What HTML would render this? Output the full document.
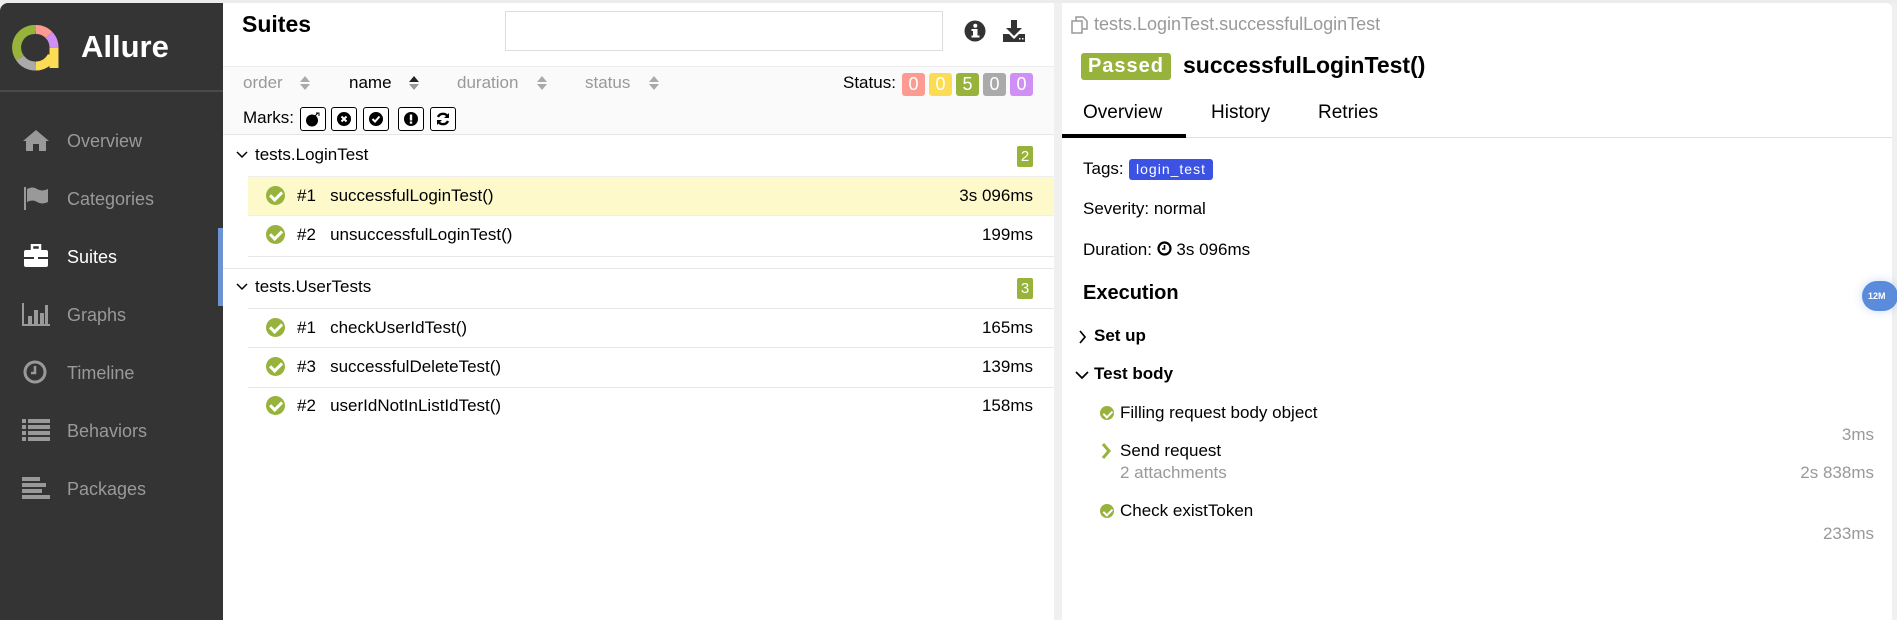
<!DOCTYPE html>
<html><head><meta charset="utf-8"><style>
*{margin:0;padding:0;box-sizing:border-box}
body{width:1897px;height:620px;overflow:hidden;background:#f0f0f0;font-family:"Liberation Sans",Arial,sans-serif;position:relative;color:#000}
.a{position:absolute;white-space:nowrap}
.side{left:0;top:3px;width:223px;height:617px;background:#343434;border-top-left-radius:8px}
.nav{left:67px;font-size:18px;color:#999;line-height:20px}
.ic{left:22px;width:28px;height:24px}
.left{left:223px;top:3px;width:831px;height:617px;background:#fff}
.right{left:1062px;top:3px;width:830px;height:617px;background:#fff;border-top-right-radius:6px}
.t17{font-size:17px;line-height:20px}
.gray{color:#999}
.bd{height:1px;background:#e6e6e6}
.chk{width:19px;height:19px;border-radius:50%;background:#97b33c}
.chk::after{content:"";position:absolute;left:33%;top:18%;width:28%;height:48%;border-right:3px solid #fff;border-bottom:3px solid #fff;transform:rotate(45deg)}
.chk.s::after{border-width:2px}
.mk{width:26px;height:24px;border:1.5px solid #000;border-radius:3px;background:#fff;top:107px}
.mk svg{position:absolute;left:4px;top:3px}
.sb{top:73px;width:23px;height:23px;border-radius:3px;color:#fff;font-size:18px;text-align:center;line-height:23px}
</style></head><body>
<div class="a" style="left:0;top:0;width:1897px;height:3px;background:#ececec"></div>
<div class="a side"></div>
<svg class="a" style="left:12px;top:24px" width="50" height="50" viewBox="0 0 50 50">
<g fill="none" stroke-width="9">
<path d="M24 5.5 A18 18 0 0 0 8 34" stroke="#97b33c"/>
<path d="M8 34 A18 18 0 0 0 24 42" stroke="#aaa"/>
<path d="M24 5.5 A18 18 0 0 1 37 11" stroke="#fd9a91"/>
<path d="M37 11 A18 18 0 0 1 42 24" stroke="#d08ff5"/>
<path d="M42 24 L42 44 M24 42 A18 18 0 0 0 40 32" stroke="#fddc55"/>
</g></svg>
<div class="a" style="left:81px;top:29px;font-size:31px;font-weight:bold;color:#fff">Allure</div>
<div class="a" style="left:0;top:90px;width:223px;height:2px;background:#4a4a4a"></div>
<svg class="a ic" style="top:128px" viewBox="0 0 28 24"><path d="M14 2 L1 13 L4 13 L4 23 L11 23 L11 16 L17 16 L17 23 L24 23 L24 13 L27 13 Z" fill="#999"/></svg>
<div class="a nav" style="top:131px">Overview</div>
<svg class="a ic" style="top:186px" viewBox="0 0 28 24"><path d="M3 1 L3 24" stroke="#999" stroke-width="2"/><path d="M5 3 Q11 0 15 3 Q20 6 26 3 L26 16 Q20 19 15 16 Q11 13 5 16Z" fill="#999"/></svg>
<div class="a nav" style="top:189px">Categories</div>
<svg class="a ic" style="top:244px" viewBox="0 0 28 24"><rect x="10" y="1" width="8" height="5" fill="none" stroke="#fff" stroke-width="2.5"/><rect x="2" y="6" width="24" height="17" rx="2" fill="#fff"/><rect x="2" y="13" width="24" height="2" fill="#343434"/><rect x="12" y="12" width="4" height="4" fill="#fff"/></svg>
<div class="a nav" style="top:247px;color:#fff">Suites</div>
<div class="a" style="left:218px;top:228px;width:5px;height:78px;background:#6d93d3"></div>
<svg class="a ic" style="top:302px" viewBox="0 0 28 24"><path d="M1 1 V23 H28" stroke="#999" stroke-width="2" fill="none"/><rect x="6" y="14" width="4" height="8" fill="#999"/><rect x="12" y="8" width="4" height="14" fill="#999"/><rect x="18" y="11" width="4" height="11" fill="#999"/><rect x="23" y="3" width="3" height="19" fill="#999"/></svg>
<div class="a nav" style="top:305px">Graphs</div>
<svg class="a ic" style="top:360px" viewBox="0 0 28 24"><circle cx="13" cy="12" r="10" fill="none" stroke="#999" stroke-width="3"/><path d="M13 6 V13 H9" stroke="#999" stroke-width="2.5" fill="none"/></svg>
<div class="a nav" style="top:363px">Timeline</div>
<svg class="a ic" style="top:418px" viewBox="0 0 28 24" fill="#999"><rect x="0" y="1" width="4" height="4"/><rect x="6" y="1" width="22" height="4"/><rect x="0" y="7" width="4" height="4"/><rect x="6" y="7" width="22" height="4"/><rect x="0" y="13" width="4" height="4"/><rect x="6" y="13" width="22" height="4"/><rect x="0" y="19" width="4" height="4"/><rect x="6" y="19" width="22" height="4"/></svg>
<div class="a nav" style="top:421px">Behaviors</div>
<svg class="a ic" style="top:476px" viewBox="0 0 28 24" fill="#999"><rect x="0" y="1" width="18" height="4"/><rect x="0" y="7" width="24" height="4"/><rect x="0" y="13" width="20" height="4"/><rect x="0" y="19" width="28" height="4"/></svg>
<div class="a nav" style="top:479px">Packages</div>

<div class="a left"></div>
<div class="a" style="left:242px;top:11px;font-size:23px;font-weight:bold">Suites</div>
<div class="a" style="left:505px;top:11px;width:438px;height:40px;border:1px solid #ddd;background:#fff"></div>
<svg class="a" style="left:964px;top:20px" width="22" height="22" viewBox="0 0 22 22"><circle cx="11" cy="11" r="10.5" fill="#333"/><rect x="9" y="9" width="4.5" height="8" fill="#fff"/><rect x="7.5" y="9" width="3" height="2" fill="#fff"/><rect x="7.5" y="15.5" width="8" height="2" fill="#fff"/><circle cx="11.3" cy="5.8" r="2" fill="#fff"/></svg>
<svg class="a" style="left:1002px;top:19px" width="24" height="24" viewBox="0 0 24 24" fill="#333"><rect x="9" y="1" width="6" height="9"/><path d="M4 9 H20 L12 17Z"/><path d="M1 15 H7 L12 20 L17 15 H23 V23 H1Z"/><rect x="17" y="19" width="1.5" height="1.5" fill="#fff"/><rect x="20" y="19" width="1.5" height="1.5" fill="#fff"/></svg>
<div class="a" style="left:223px;top:66px;width:831px;height:69px;background:#fafafa;border-top:1px solid #eee;border-bottom:1px solid #e6e6e6"></div>
<div class="a t17 gray" style="left:243px;top:73px">order</div>
<div class="a t17" style="left:349px;top:73px">name</div>
<div class="a t17 gray" style="left:457px;top:73px">duration</div>
<div class="a t17 gray" style="left:585px;top:73px">status</div>
<svg class="a" style="left:299px;top:75px" width="12" height="16"><path d="M1 7 L6 1 L11 7Z M1 9 L6 15 L11 9Z" fill="#aaa"/></svg>
<svg class="a" style="left:408px;top:75px" width="12" height="16"><path d="M1 7 L6 1 L11 7Z" fill="#222"/><path d="M1 9 L6 15 L11 9Z" fill="#999"/></svg>
<svg class="a" style="left:536px;top:75px" width="12" height="16"><path d="M1 7 L6 1 L11 7Z M1 9 L6 15 L11 9Z" fill="#aaa"/></svg>
<svg class="a" style="left:648px;top:75px" width="12" height="16"><path d="M1 7 L6 1 L11 7Z M1 9 L6 15 L11 9Z" fill="#aaa"/></svg>
<div class="a t17" style="left:243px;top:108px">Marks:</div>
<div class="a mk" style="left:300px"><svg width="16" height="16" viewBox="0 0 16 16"><circle cx="7" cy="9.5" r="6" fill="#000"/><path d="M10 5 L13 2 M11 2 H14 V5" stroke="#000" stroke-width="1" fill="none"/></svg></div>
<div class="a mk" style="left:331px"><svg width="16" height="16" viewBox="0 0 16 16"><circle cx="8" cy="8" r="7" fill="#000"/><path d="M5.5 5.5 L10.5 10.5 M10.5 5.5 L5.5 10.5" stroke="#fff" stroke-width="2"/></svg></div>
<div class="a mk" style="left:363px"><svg width="16" height="16" viewBox="0 0 16 16"><circle cx="8" cy="8" r="7" fill="#000"/><path d="M4.5 8 L7 10.5 L11.5 5.5" stroke="#fff" stroke-width="2" fill="none"/></svg></div>
<div class="a mk" style="left:398px"><svg width="16" height="16" viewBox="0 0 16 16"><circle cx="8" cy="8" r="7" fill="#000"/><rect x="6.8" y="3.5" width="2.4" height="6" fill="#fff"/><rect x="6.8" y="10.5" width="2.4" height="2.2" fill="#fff"/></svg></div>
<div class="a mk" style="left:430px"><svg width="16" height="16" viewBox="0 0 16 16"><path d="M13 6 A5.5 5.5 0 0 0 3 6 M3 10 A5.5 5.5 0 0 0 13 10" stroke="#000" stroke-width="2.4" fill="none"/><path d="M14 2 V7 H9Z M2 14 V9 H7Z" fill="#000"/></svg></div>
<div class="a t17" style="left:843px;top:73px">Status:</div>
<div class="a sb" style="left:902px;background:#fd9a91">0</div>
<div class="a sb" style="left:929px;background:#fddc55">0</div>
<div class="a sb" style="left:956px;background:#97b33c">5</div>
<div class="a sb" style="left:983px;background:#aaa">0</div>
<div class="a sb" style="left:1010px;background:#d08ff5">0</div>

<svg class="a" style="left:236px;top:150px" width="12" height="10"><path d="M1 2 L6 7 L11 2" stroke="#000" stroke-width="1.5" fill="none"/></svg>
<div class="a t17" style="left:255px;top:145px">tests.LoginTest</div>
<div class="a" style="left:1017px;top:146px;width:16px;height:21px;background:#97b33c;color:#fff;font-size:15px;text-align:center;line-height:21px;border-radius:2px">2</div>
<div class="a" style="left:248px;top:176px;width:806px;height:40px;background:#fdf9cb;border-top:1px solid #eee;border-bottom:1px solid #eee"></div>
<div class="a bd" style="left:248px;top:256px;width:806px"></div>
<div class="a bd" style="left:223px;top:268px;width:831px"></div>
<svg class="a" style="left:236px;top:282px" width="12" height="10"><path d="M1 2 L6 7 L11 2" stroke="#000" stroke-width="1.5" fill="none"/></svg>
<div class="a t17" style="left:255px;top:277px">tests.UserTests</div>
<div class="a" style="left:1017px;top:278px;width:16px;height:21px;background:#97b33c;color:#fff;font-size:15px;text-align:center;line-height:21px;border-radius:2px">3</div>
<div class="a bd" style="left:248px;top:308px;width:806px"></div>
<div class="a bd" style="left:248px;top:347px;width:806px"></div>
<div class="a bd" style="left:248px;top:387px;width:806px"></div>

<div class="a chk" style="left:266px;top:186px"></div><div class="a t17" style="left:297px;top:186px">#1&nbsp;&nbsp;&nbsp;successfulLoginTest()</div><div class="a t17" style="right:864px;top:186px">3s 096ms</div>
<div class="a chk" style="left:266px;top:225px"></div><div class="a t17" style="left:297px;top:225px">#2&nbsp;&nbsp;&nbsp;unsuccessfulLoginTest()</div><div class="a t17" style="right:864px;top:225px">199ms</div>
<div class="a chk" style="left:266px;top:318px"></div><div class="a t17" style="left:297px;top:318px">#1&nbsp;&nbsp;&nbsp;checkUserIdTest()</div><div class="a t17" style="right:864px;top:318px">165ms</div>
<div class="a chk" style="left:266px;top:357px"></div><div class="a t17" style="left:297px;top:357px">#3&nbsp;&nbsp;&nbsp;successfulDeleteTest()</div><div class="a t17" style="right:864px;top:357px">139ms</div>
<div class="a chk" style="left:266px;top:396px"></div><div class="a t17" style="left:297px;top:396px">#2&nbsp;&nbsp;&nbsp;userIdNotInListIdTest()</div><div class="a t17" style="right:864px;top:396px">158ms</div>

<div class="a right"></div>
<svg class="a" style="left:1071px;top:16px" width="18" height="18" viewBox="0 0 18 18"><rect x="1" y="5" width="10" height="12" fill="none" stroke="#999" stroke-width="1.5"/><path d="M5 5 V1 H12 L16 5 V13 H11" fill="none" stroke="#999" stroke-width="1.5"/></svg>
<div class="a gray" style="left:1094px;top:14px;font-size:18px;color:#999">tests.LoginTest.successfulLoginTest</div>
<div class="a" style="left:1081px;top:53px;width:90px;height:27px;background:#97b33c;border-radius:3px;color:#fff;font-size:20px;font-weight:bold;text-align:center;line-height:27px;letter-spacing:1px">Passed</div>
<div class="a" style="left:1183px;top:52px;font-size:23px;font-weight:bold">successfulLoginTest()</div>
<div class="a" style="left:1083px;top:102px;font-size:19px">Overview</div>
<div class="a" style="left:1211px;top:102px;font-size:19px">History</div>
<div class="a" style="left:1318px;top:102px;font-size:19px">Retries</div>
<div class="a" style="left:1062px;top:137px;width:830px;height:1px;background:#e0e0e0"></div>
<div class="a" style="left:1062px;top:134px;width:124px;height:4px;background:#000"></div>
<div class="a t17" style="left:1083px;top:159px">Tags:</div>
<div class="a" style="left:1129px;top:159px;width:84px;height:21px;background:#3b52e3;border-radius:3px;color:#fff;font-size:14px;line-height:21px;text-align:center;letter-spacing:1px">login_test</div>
<div class="a t17" style="left:1083px;top:199px">Severity: normal</div>
<div class="a t17" style="left:1083px;top:240px">Duration: <svg width="15" height="15" viewBox="0 0 15 15" style="vertical-align:-1px"><circle cx="7.5" cy="7.5" r="6" fill="none" stroke="#000" stroke-width="2.2"/><path d="M7.5 4 V8 H5" stroke="#000" stroke-width="1.6" fill="none"/></svg> 3s 096ms</div>
<div class="a" style="left:1083px;top:282px;font-size:20px;font-weight:bold">Execution</div>
<div class="a" style="left:1862px;top:281px;width:36px;height:30px;border-radius:15px;background:#5b8cdb;color:#fff;font-size:9px;font-weight:bold;line-height:30px;padding-left:6px;box-shadow:0 0 10px rgba(91,140,219,.3)">12M</div>
<svg class="a" style="left:1078px;top:330px" width="10" height="14"><path d="M2 1 L7 7 L2 13" stroke="#000" stroke-width="1.7" fill="none"/></svg>
<div class="a t17" style="left:1094px;top:326px;font-weight:bold">Set up</div>
<svg class="a" style="left:1075px;top:370px" width="14" height="10"><path d="M1 2 L7 8 L13 2" stroke="#000" stroke-width="1.7" fill="none"/></svg>
<div class="a t17" style="left:1094px;top:364px;font-weight:bold">Test body</div>
<div class="a chk s" style="left:1100px;top:406px;width:14px;height:14px"></div>
<div class="a t17" style="left:1120px;top:403px">Filling request body object</div>
<div class="a t17 gray" style="right:23px;top:425px">3ms</div>
<svg class="a" style="left:1101px;top:443px" width="10" height="16"><path d="M2 1 L8 8 L2 15" stroke="#97b33c" stroke-width="3" fill="none"/></svg>
<div class="a t17" style="left:1120px;top:441px">Send request</div>
<div class="a t17 gray" style="left:1120px;top:463px">2 attachments</div>
<div class="a t17 gray" style="right:23px;top:463px">2s 838ms</div>
<div class="a chk s" style="left:1100px;top:504px;width:14px;height:14px"></div>
<div class="a t17" style="left:1120px;top:501px">Check existToken</div>
<div class="a t17 gray" style="right:23px;top:524px">233ms</div>
</body></html>
